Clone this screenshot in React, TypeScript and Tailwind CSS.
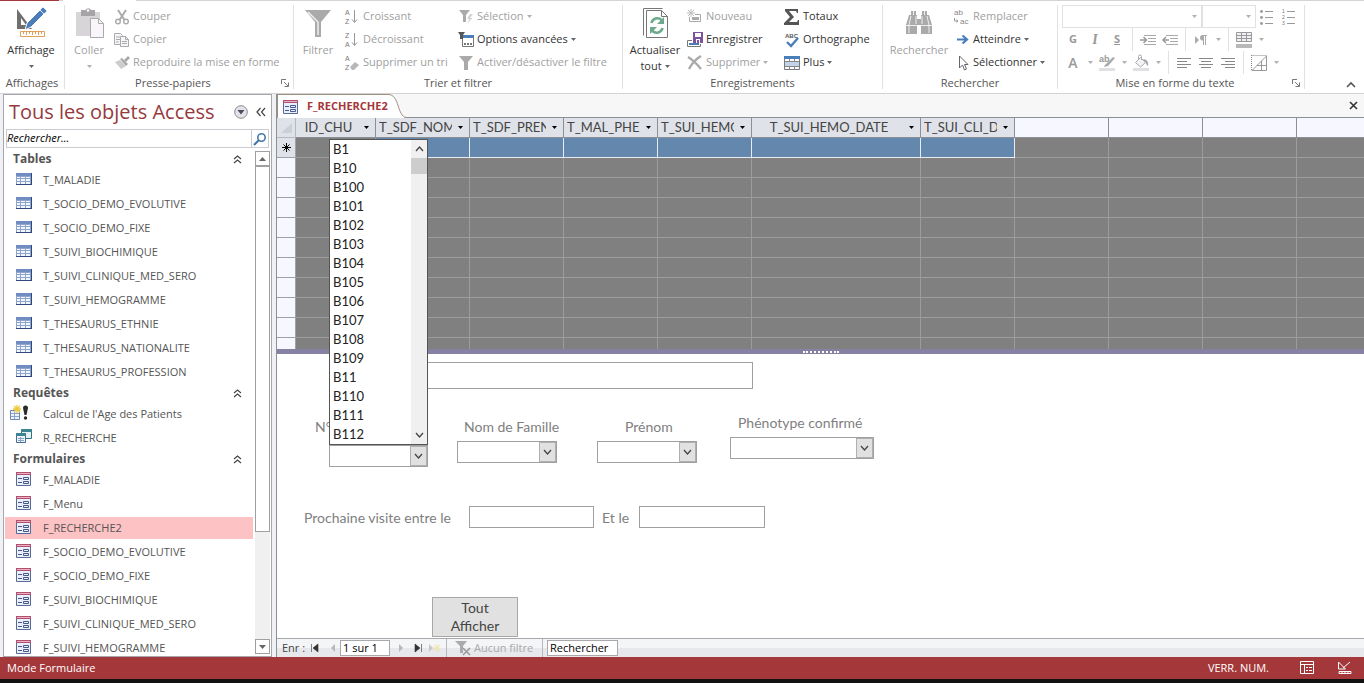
import React, { ReactNode } from 'react';
import clsx from 'clsx';

const tables = [
    'T_MALADIE',
    'T_SOCIO_DEMO_EVOLUTIVE',
    'T_SOCIO_DEMO_FIXE',
    'T_SUIVI_BIOCHIMIQUE',
    'T_SUIVI_CLINIQUE_MED_SERO',
    'T_SUIVI_HEMOGRAMME',
    'T_THESAURUS_ETHNIE',
    'T_THESAURUS_NATIONALITE',
    'T_THESAURUS_PROFESSION',
];

const formulaires = [
    'F_MALADIE',
    'F_Menu',
    'F_RECHERCHE2',
    'F_SOCIO_DEMO_EVOLUTIVE',
    'F_SOCIO_DEMO_FIXE',
    'F_SUIVI_BIOCHIMIQUE',
    'F_SUIVI_CLINIQUE_MED_SERO',
    'F_SUIVI_HEMOGRAMME',
];

const columns = [
    { name: 'ID_CHU', width: 'w-[80px]', center: true },
    { name: 'T_SDF_NOM', width: 'w-[94px]' },
    { name: 'T_SDF_PREN', width: 'w-[94px]' },
    { name: 'T_MAL_PHE', width: 'w-[94px]' },
    { name: 'T_SUI_HEMO', width: 'w-[94px]' },
    { name: 'T_SUI_HEMO_DATE', width: 'w-[169px]', center: true },
    { name: 'T_SUI_CLI_D', width: 'w-[94px]' },
];

const numeros = [
    'B1', 'B10', 'B100', 'B101', 'B102', 'B103', 'B104', 'B105',
    'B106', 'B107', 'B108', 'B109', 'B11', 'B110', 'B111', 'B112',
];

interface IconProps {
    children: ReactNode;
    w?: number;
    h?: number;
    className?: string;
}

const Icon = ({ children, w = 16, h = 16, className }: IconProps) => (
    <svg width={w} height={h} viewBox={`0 0 ${w} ${h}`} fill="none" aria-hidden="true" className={clsx('shrink-0 overflow-visible', className)}>
        {children}
    </svg>
);

const Caret = ({ className = 'text-[#666]' }: { className?: string }) => (
    <Icon w={5} h={3} className={className}><path d="M0 0h5L2.5 3z" fill="currentColor" /></Icon>
);

/* ---------- ribbon icons ---------- */

const ViewIcon = () => (
    <Icon w={32} h={32}>
        <path d="M2 2v20h15zM6 11l5 7H6z" fill="#6f6f6f" fillRule="evenodd" />
        <path d="M12 16 25 3l4 4-13 13-6 3z" fill="#4a7ebb" stroke="#fff" strokeWidth="1" />
        <path d="m25 3 3-3 4 4-3 3z" fill="#4a7ebb" stroke="#fff" strokeWidth=".7" />
        <path d="M5.500 24.500h24v5h-24z" fill="#fff" stroke="#dfa05c" />
        <path d="M8.500 25v2M11.500 25v3M14.500 25v2M17.500 25v3M20.500 25v2M23.500 25v3M26.500 25v2" stroke="#dfa05c" />
    </Icon>
);

const PasteIcon = () => (
    <Icon w={32} h={32}>
        <path d="M3 5h24v24H3z" fill="#d8d5d8" />
        <path d="M8 3h4.500a3 3 0 0 1 5.500 0h4v6H8z" fill="#a7a4a7" />
        <circle cx="15" cy="3.500" r="1.200" fill="#fff" />
        <path d="M17.500 11.500h8l5 5v14h-13z" fill="#f8f6fa" stroke="#aaa" />
        <path d="M25.500 11.500v5h5" stroke="#aaa" />
    </Icon>
);

const CutIcon = () => (
    <Icon>
        <path d="m4 1 6.500 10M12 1 5.500 11" stroke="#aaa" strokeWidth="2" />
        <circle cx="4" cy="12.500" r="2.300" stroke="#aaa" strokeWidth="1.400" />
        <circle cx="12" cy="12.500" r="2.300" stroke="#aaa" strokeWidth="1.400" />
    </Icon>
);

const CopyIcon = () => (
    <Icon>
        <path d="M.5 1.500h6l2 2v9h-8z" fill="#f7f5f9" stroke="#aaa" />
        <path d="M2 5h4M2 7.500h4M2 10h3" stroke="#aaa" />
        <path d="M6.500 4.500h5l3 3v7h-8z" fill="#f7f5f9" stroke="#aaa" />
        <path d="M11.500 4.500v3h3M8 9.500h5M8 11.500h5" stroke="#aaa" />
    </Icon>
);

const BrushIcon = () => (
    <Icon>
        <path d="m1 7 5-2 6 6-5 3z" fill="#ccc" />
        <path d="m6 4 2-1 6 6-2 2z" fill="#aaa" />
        <path d="m10 5 4-4 2 2-4 4z" fill="#aaa" />
    </Icon>
);

const BigFunnel = () => (
    <Icon w={32} h={32}>
        <path d="M3 3h26L19 15v15h-6V15z" fill="#aaa" />
        <path d="m6 5 10 10v13" stroke="#eee" strokeWidth="1.500" />
    </Icon>
);

const Funnel = () => (
    <Icon><path d="M1 1h14l-5 6v8H6V7z" fill="#aaa" /></Icon>
);

const SelectionIcon = () => (
    <Icon>
        <path d="M1 1h11L8 6v7H5V6z" fill="#aaa" />
        <path d="m12 5-3 5h2.500L9 15l5.500-6H12l3-4z" fill="#d2d2d2" />
    </Icon>
);

const AdvancedIcon = () => (
    <Icon>
        <path d="M4.500 4.500h11v10h-11z" fill="#fff" stroke="#777" />
        <path d="M5 3h11v3H5z" fill="#4a7ebb" />
        <path d="M6 11h2v2H6zM9 11h2v2H9zM12 11h2v2h-2z" fill="#777" />
        <path d="M0 0h7L5 3v4H2V3z" fill="#555" />
    </Icon>
);

// Two stacked letters with an arrow or an eraser next to them
const SortIcon = ({ top, bottom, eraser }: { top: string; bottom: string; eraser?: boolean }) => (
    <Icon>
        <text x="1" y="6" fontSize="7" fontFamily="Liberation Sans" fill="#777">{top}</text>
        <text x="1" y="15" fontSize="7" fontFamily="Liberation Sans" fill="#777">{bottom}</text>
        {eraser
            ? <path d="m6 12 5-5 4 3-5 5H8z" fill="#b8b8b8" />
            : <path d="M10.500 1v12M8 10.500l2.500 3 2.500-3" stroke="#999" />}
    </Icon>
);

const RefreshIcon = () => (
    <Icon w={32} h={32}>
        <path d="M23.500 1.500h-19v27" stroke="#777" />
        <path d="M7.500 3.500h15l6 6v21h-21z" fill="#fff" stroke="#777" />
        <path d="M22.500 3.500v6h6" stroke="#777" />
        <path d="M12.500 16a6 6 0 0 1 10-3M23.500 21a6 6 0 0 1-10 3" stroke="#6caa8b" strokeWidth="2.600" />
        <path d="M25 10v7h-7zM11 27v-7h7z" fill="#6caa8b" />
    </Icon>
);

const NewIcon = () => (
    <Icon>
        <path d="M4 0v8M0 4h8M1 1l6 6M7 1 1 7" stroke="#bbb" />
        <path d="M8 5.500h5.500v7H2.500V8" stroke="#aaa" />
        <path d="M5 8h7v3H5z" fill="#aaa" />
    </Icon>
);

const SaveIcon = () => (
    <Icon>
        <path d="M6 0h10v11H6z" fill="#7c529c" />
        <path d="M8 1h6v4H8zM9 7h4v4H9z" fill="#fff" />
        <path d="M10 8h2v3h-2z" fill="#7c529c" />
        <path d="M5 8.500H.5v6h13V12" stroke="#777" />
        <path d="M2 11h10v2H2z" fill="#4a7ebb" />
    </Icon>
);

const DeleteIcon = () => (
    <Icon><path d="M1 2c5 3 9 7 13 12M14 1C9 4 5 8 2 14" stroke="#aaa" strokeWidth="2.400" /></Icon>
);

const SumIcon = () => (
    <Icon><path d="M1 0h13v4h-1l-1-2H5l5 6-5 5h8l1-2h1v5H0v-2l6-6-5-6z" fill="#555" /></Icon>
);

const SpellIcon = () => (
    <Icon>
        <text x="1" y="6" fontSize="6" fontWeight="700" fontFamily="Liberation Sans" fill="#555">ABC</text>
        <path d="m3 10 4 4 7-8" stroke="#4a7ebb" strokeWidth="2.400" />
    </Icon>
);

const MoreIcon = () => (
    <Icon>
        <path d="M.5 2.500h15v12H.5z" fill="#fff" stroke="#777" />
        <path d="M0 1h16v3H0z" fill="#4a7ebb" />
        <path d="M1 7h14v4H1z" fill="#c3d4ea" />
        <path d="M.5 6.500h15M.5 11.500h15M5.500 4v3M10.500 4v3M5.500 11v3M10.500 11v3" stroke="#888" />
    </Icon>
);

const Binoculars = () => (
    <Icon w={32} h={32}>
        <path d="M8 4h5v4h1v4h4V8h1V4h5v4h2l3 10v9H18v-9h-4v9H3v-9L6 8h2z" fill="#aaa" />
        <path d="M10.500 4v4M21.500 4v4M8 9 6 18v8M24 9l2 9v8M13 9v8M19 9v8M3 18.500h11M18 18.500h11" stroke="#fff" strokeWidth=".8" />
    </Icon>
);

const ReplaceIcon = () => (
    <Icon>
        <text x="0" y="6" fontSize="8" fontFamily="Liberation Sans" fill="#888">ab</text>
        <text x="6" y="15" fontSize="8" fontFamily="Liberation Sans" fill="#888">ac</text>
        <path d="M.5 9v3H4M2.500 10.500 4 12l-1.500 1.500" stroke="#999" />
    </Icon>
);

const GotoIcon = () => (
    <Icon><path d="M3 7.500h10M8.500 3.500l4.500 4-4.500 4" stroke="#4a7ebb" strokeWidth="2.200" /></Icon>
);

const PointerIcon = () => (
    <Icon><path d="M5.500 1v12l3-3 2 5 2-1-2-4.500h3.500z" fill="#fff" stroke="#666" /></Icon>
);

const BulletsIcon = ({ numbered }: { numbered?: boolean }) => (
    <Icon>
        {[2, 8, 14].map((y, i) => numbered
            ? <text key={y} x="1" y={y + 2} fontSize="5" fontFamily="Liberation Sans" fill="#777">{i + 1}</text>
            : <circle key={y} cx="2.500" cy={y + 0.5} r="1.400" fill="#999" />)}
        <path d="M6 2.500h8M6 8.500h8M6 14.500h8" stroke="#999" />
    </Icon>
);

const IndentIcon = ({ left }: { left?: boolean }) => (
    <Icon>
        <path d="M4 3.500h12M8 6.500h8M8 9.500h8M4 12.500h12" stroke="#aaa" />
        <path d={left ? 'M7 8H1M4 5 1 8l3 3' : 'M0 8h6M3.500 5l3 3-3 3'} stroke="#999" strokeWidth="1.500" />
    </Icon>
);

const PilcrowIcon = () => (
    <Icon>
        <path d="m2 4 4 4-4 4z" fill="#aaa" />
        <path d="M7 6a2.500 2.500 0 0 1 2.500-3H14v1h-1v9h-1V4h-1v9h-1V8.500A2.500 2.500 0 0 1 7 6z" fill="#aaa" />
    </Icon>
);

const GridlinesIcon = () => (
    <Icon>
        <path d="M.5.500h15v9H.5z" fill="#f0eef4" stroke="#999" />
        <path d="M0 3.500h16M0 6.500h16M5.500 0v10M10.500 0v10" stroke="#999" />
        <path d="M0 12h16v4H0z" fill="#b8b8b8" />
    </Icon>
);

const HighlightIcon = () => (
    <Icon>
        <text x="0" y="7" fontSize="9" fontWeight="700" fontFamily="Liberation Sans" fill="#999">ab</text>
        <path d="m6 10 8-8 2 1-7 8-4 1z" fill="#aaa" />
        <path d="M0 13h16v3H0z" fill="#e2dfe4" />
    </Icon>
);

const BucketIcon = () => (
    <Icon>
        <path d="m2.500 7.500 5-5 5 5-5 4.500z" fill="#f4f2f7" stroke="#aaa" />
        <path d="M5.500 5V1.500a1.500 1.500 0 0 1 3 0V5" stroke="#aaa" />
        <path d="M10 4c4 0 6 3 5 7-2-1-2-4-3-4z" fill="#aaa" />
        <path d="M0 13h16v3H0z" fill="#e2dfe4" />
    </Icon>
);

const AlignIcon = ({ d }: { d: string }) => (
    <Icon><path d={d} stroke="#888" /></Icon>
);

const AltRowIcon = () => (
    <Icon>
        <path d="M.5.500h15M.5 0v16" stroke="#888" strokeDasharray="1 1" />
        <path d="M15.500 1v14.500H1zM6 10.500h9M10.500 6v9" stroke="#999" />
    </Icon>
);

const Launcher = () => (
    <Icon w={8} h={8}><path d="M.5 5V.5H5M3 3l4 4M7.500 3.500v4h-4" stroke="#777" /></Icon>
);

/* ---------- object icons ---------- */

const TableIcon = () => (
    <Icon>
        <path d="M0 2h16v12H0z" fill="#2f4a78" />
        <path d="M0 2h15v3H0z" fill="#6f8dc0" />
        <path d="M0 5h15v8H0z" fill="#8ea4cc" />
        <path d="M1 6h3v1H1zM5 6h4v1H5zM10 6h4v1h-4zM1 8h3v2H1zM5 8h4v2H5zM10 8h4v2h-4zM1 11h3v2H1zM5 11h4v2H5zM10 11h4v2h-4z" fill="#f2f6ff" />
    </Icon>
);

const FormIcon = () => (
    <Icon>
        <path d="M.5 1.500h14v13H.5z" fill="#eaf0fb" stroke="#5a6a94" />
        <path d="M0 1h15v3H0z" fill="#b3506f" />
        <path d="M1 2h13v1H1z" fill="#e6b2c0" />
        <path d="M2 7.500h4M2 11.500h4M7.500 6.500h5v2h-5zM7.500 10.500h5v2h-5z" stroke="#47598c" />
    </Icon>
);

const ActionQueryIcon = () => (
    <Icon w={20}>
        <path d="M.5 5.500h9v9h-9z" fill="#edf2fb" stroke="#6b86b8" />
        <path d="M1 8.500h8M1 11.500h8M4.500 6v8" stroke="#8ea4cc" />
        <path d="M7 0v8M3 4h8M4 1l6 6M10 1 4 7" stroke="#f0c93a" strokeWidth="1.300" />
        <path d="M13 3a2.500 2.500 0 0 1 5 0l-1.500 7h-2z" fill="#2b2b2b" />
        <circle cx="15.500" cy="13" r="1.700" fill="#2b2b2b" />
    </Icon>
);

const QueryIcon = () => (
    <Icon>
        <path d="M5.500.500h10v9h-10z" fill="#e5f1f3" stroke="#2f7280" />
        <path d="M5 0h11v3H5z" fill="#3d8493" />
        <path d="M.5 4.500h9v9h-9z" fill="#eef3fb" stroke="#456a96" />
        <path d="M0 4h10v3H0z" fill="#3d8493" />
        <path d="M2 9.500h6M2 11.500h6M4.500 8v5" stroke="#8aa3c4" />
    </Icon>
);

/* ---------- ribbon ---------- */

interface CommandProps {
    icon: ReactNode;
    label: string;
    caret?: boolean;
    off?: boolean;
}

const Command = ({ icon, label, caret, off }: CommandProps) => (
    <button type="button" disabled={off} className={clsx('flex h-[23px] items-center gap-[3px] whitespace-nowrap', off ? 'text-[#a0a0a0]' : 'text-[#333]')}>
        {icon}
        <span>{label}</span>
        {caret && <Caret className={off ? 'text-[#b0b0b0]' : 'text-[#666]'} />}
    </button>
);

interface BigCommandProps extends CommandProps {
    second?: string;
}

const BigCommand = ({ icon, label, second, caret, off }: BigCommandProps) => (
    <button type="button" disabled={off} className={clsx('flex w-14 flex-col items-center whitespace-nowrap pt-[2px]', off ? 'text-[#a0a0a0]' : 'text-[#333]')}>
        {icon}
        <span className="mt-[3px] leading-4">{label}</span>
        <span className="flex h-4 items-center gap-[3px] leading-4">
            {second}
            {caret && <Caret className={off ? 'text-[#b0b0b0]' : 'text-[#666]'} />}
        </span>
    </button>
);

interface GroupProps {
    title: string;
    width: string;
    launcher?: boolean;
    children: ReactNode;
}

const Group = ({ title, width, launcher, children }: GroupProps) => (
    <section className={clsx('my-1 flex shrink-0 flex-col border-r border-[#e1e1e1]', width)}>
        <div className="flex min-h-0 flex-1">{children}</div>
        <div className="flex h-3 items-center text-[#555]">
            <h2 className="flex-1 text-center leading-3 whitespace-nowrap">{title}</h2>
            {launcher && <button type="button" aria-label={`Options ${title}`} className="w-3"><Launcher /></button>}
        </div>
    </section>
);

const Tool = ({ label, children }: { label: string; children: ReactNode }) => (
    <button type="button" disabled aria-label={label} className="flex h-[23px] w-[22px] items-center justify-center text-[#999]">
        {children}
    </button>
);

const ToolCaret = () => <span className="flex w-3 items-center justify-center"><Caret className="text-[#b0b0b0]" /></span>;
const ToolSep = () => <span className="mx-1 h-[23px] w-px bg-[#e1e1e1]" />;

const FontSelect = ({ label, width }: { label: string; width: string }) => (
    <div className={clsx('flex h-[23px] items-center border border-[#e1e1e1]', width)}>
        <select aria-label={label} disabled className="h-full min-w-0 flex-1 appearance-none bg-white" />
        <Caret className="mr-1 text-[#b0b0b0]" />
    </div>
);

const Ribbon = () => (
    <header className="shrink-0 bg-white">
        <div className="flex h-px bg-[#d4d4d4]">
            <span className="w-[59px] bg-[#a4373a]" />
            <span className="ml-1 w-[73px] bg-white" />
        </div>
        <div className="flex h-[93px] border-b border-[#d4d4d4]">
            <Group title="Affichages" width="w-[65px]">
                <div className="pl-[3px]"><BigCommand icon={<ViewIcon />} label="Affichage" caret /></div>
            </Group>
            <Group title="Presse-papiers" width="w-[229px]" launcher>
                <div className="w-[49px] -ml-1"><BigCommand icon={<PasteIcon />} label="Coller" caret off /></div>
                <div className="ml-1">
                    <Command icon={<CutIcon />} label="Couper" off />
                    <Command icon={<CopyIcon />} label="Copier" off />
                    <Command icon={<BrushIcon />} label="Reproduire la mise en forme" off />
                </div>
            </Group>
            <Group title="Trier et filtrer" width="w-[329px]">
                <div className="w-[50px] -ml-1"><BigCommand icon={<BigFunnel />} label="Filtrer" off /></div>
                <div className="ml-1 w-[114px]">
                    <Command icon={<SortIcon top="A" bottom="Z" />} label="Croissant" off />
                    <Command icon={<SortIcon top="Z" bottom="A" />} label="Décroissant" off />
                    <Command icon={<SortIcon top="A" bottom="Z" eraser />} label="Supprimer un tri" off />
                </div>
                <div>
                    <Command icon={<SelectionIcon />} label="Sélection" caret off />
                    <Command icon={<AdvancedIcon />} label="Options avancées" caret />
                    <Command icon={<Funnel />} label="Activer/désactiver le filtre" off />
                </div>
            </Group>
            <Group title="Enregistrements" width="w-[260px]">
                <div className="w-16 pl-1"><BigCommand icon={<RefreshIcon />} label="Actualiser" second="tout" caret /></div>
                <div className="w-[97px]">
                    <Command icon={<NewIcon />} label="Nouveau" off />
                    <Command icon={<SaveIcon />} label="Enregistrer" />
                    <Command icon={<DeleteIcon />} label="Supprimer" off caret />
                </div>
                <div>
                    <Command icon={<SumIcon />} label="Totaux" />
                    <Command icon={<SpellIcon />} label="Orthographe" />
                    <Command icon={<MoreIcon />} label="Plus" caret />
                </div>
            </Group>
            <Group title="Rechercher" width="w-[175px]">
                <div className="w-[71px] pl-2"><BigCommand icon={<Binoculars />} label="Rechercher" off /></div>
                <div>
                    <Command icon={<ReplaceIcon />} label="Remplacer" off />
                    <Command icon={<GotoIcon />} label="Atteindre" caret />
                    <Command icon={<PointerIcon />} label="Sélectionner" caret />
                </div>
            </Group>
            <Group title="Mise en forme du texte" width="w-[247px]" launcher>
                <div className="flex flex-col pl-1">
                    <div className="flex">
                        <FontSelect label="Police" width="w-[140px]" />
                        <FontSelect label="Taille" width="w-[54px]" />
                        <Tool label="Puces"><BulletsIcon /></Tool>
                        <Tool label="Numérotation"><BulletsIcon numbered /></Tool>
                    </div>
                    <div className="flex">
                        <Tool label="Gras"><b>G</b></Tool>
                        <Tool label="Italique"><i className="font-serif text-sm font-bold">I</i></Tool>
                        <Tool label="Souligné"><b className="underline">S</b></Tool>
                        <ToolSep />
                        <Tool label="Augmenter le retrait"><IndentIcon /></Tool>
                        <Tool label="Diminuer le retrait"><IndentIcon left /></Tool>
                        <ToolSep />
                        <Tool label="Sens du texte"><PilcrowIcon /></Tool>
                        <ToolCaret />
                        <ToolSep />
                        <Tool label="Quadrillage"><GridlinesIcon /></Tool>
                        <ToolCaret />
                    </div>
                    <div className="flex">
                        <Tool label="Couleur de police"><span className="text-sm font-semibold">A</span></Tool>
                        <ToolCaret />
                        <Tool label="Surlignage"><HighlightIcon /></Tool>
                        <ToolCaret />
                        <Tool label="Remplissage"><BucketIcon /></Tool>
                        <ToolCaret />
                        <ToolSep />
                        <Tool label="Aligner à gauche"><AlignIcon d="M1 3.500h14M1 6.500h10M1 9.500h14M1 12.500h10" /></Tool>
                        <Tool label="Centrer"><AlignIcon d="M1 3.500h14M3 6.500h10M1 9.500h14M3 12.500h10" /></Tool>
                        <Tool label="Aligner à droite"><AlignIcon d="M1 3.500h14M5 6.500h10M1 9.500h14M5 12.500h10" /></Tool>
                        <ToolSep />
                        <Tool label="Couleur des lignes"><AltRowIcon /></Tool>
                        <ToolCaret />
                    </div>
                </div>
            </Group>
            <button type="button" aria-label="Réduire le ruban" className="mr-2 mb-1 ml-auto self-end">
                <Icon w={10} h={8}><path d="m1 6 4-4 4 4" stroke="#555" strokeWidth="1.600" /></Icon>
            </button>
        </div>
    </header>
);

/* ---------- navigation pane ---------- */

const PaneGroup = ({ title, children }: { title: string; children: ReactNode }) => (
    <section>
        <h3 className="flex h-[18px] items-center justify-between pr-[11px] pl-2 text-xs font-bold text-[#555]">
            {title}
            <Icon w={9} h={9}><path d="m1 4 3.500-3L8 4M1 8l3.500-3L8 8" stroke="#444" strokeWidth="1.200" /></Icon>
        </h3>
        <ul>{children}</ul>
    </section>
);

interface PaneItemProps {
    icon: ReactNode;
    name: string;
    active?: boolean;
}

const PaneItem = ({ icon, name, active }: PaneItemProps) => (
    <li className="py-px">
        <button type="button" className={clsx('flex h-[22px] w-full items-center text-left text-[#555]', active && 'bg-[#fcc2c4]')}>
            <span className="mb-[2px] flex w-[38px] justify-center">{icon}</span>
            {name}
        </button>
    </li>
);

const NavigationPane = () => (
    <aside className="ml-[3px] flex w-[269px] shrink-0 flex-col border border-[#a5a8ad] bg-white">
        <div className="flex h-[34px] shrink-0 items-center px-[5px]">
            <h1 className="flex-1 text-[20px] whitespace-nowrap text-[#953a3d]">Tous les objets Access</h1>
            <button type="button" aria-label="Menu des objets" className="mr-2">
                <Icon w={14} h={14}>
                    <circle cx="7" cy="7" r="6.300" fill="#e3e3ea" stroke="#8a8a8f" />
                    <path d="M3.500 5h7L7 9.500z" fill="#4a4d5c" />
                </Icon>
            </button>
            <button type="button" aria-label="Réduire le volet">
                <Icon w={10} h={10}><path d="M4.500 1 1 5l3.500 4M9 1 5.500 5 9 9" stroke="#444" strokeWidth="1.200" /></Icon>
            </button>
        </div>
        <div className="mx-[2px] flex h-[19px] shrink-0 border border-[#c9cbd0]">
            <input type="text" aria-label="Rechercher un objet" placeholder="Rechercher..." className="min-w-0 flex-1 text-[11px] italic outline-none placeholder:text-black" />
            <button type="button" aria-label="Lancer la recherche" className="flex w-[17px] items-center justify-center border-l border-[#c9cbd0]">
                <Icon w={14} h={14}>
                    <circle cx="8.500" cy="5.500" r="3.700" stroke="#4477aa" strokeWidth="1.600" />
                    <path d="m6 8-5 5" stroke="#4477aa" strokeWidth="2.200" />
                </Icon>
            </button>
        </div>
        <div className="mt-[2px] flex min-h-0 flex-1">
            <div className="ml-px flex-1 overflow-hidden">
                <PaneGroup title="Tables">
                    {tables.map((name) => <PaneItem key={name} icon={<TableIcon />} name={name} />)}
                </PaneGroup>
                <PaneGroup title="Requêtes">
                    <PaneItem icon={<span className="mr-2"><ActionQueryIcon /></span>} name="Calcul de l'Age des Patients" />
                    <PaneItem icon={<QueryIcon />} name="R_RECHERCHE" />
                </PaneGroup>
                <PaneGroup title="Formulaires">
                    {formulaires.map((name) => (
                        <PaneItem key={name} icon={<FormIcon />} name={name} active={name === 'F_RECHERCHE2'} />
                    ))}
                </PaneGroup>
            </div>
            <div className="mt-px mr-px mb-[2px] ml-[2px] flex w-[15px] flex-col bg-[#f0f0f0]">
                <button type="button" aria-label="Défiler vers le haut" className="flex h-[15px] items-center justify-center border border-[#a0a0a0] bg-white">
                    <Icon w={7} h={4}><path d="M0 4h7L3.500 0z" fill="#666" /></Icon>
                </button>
                <div className="h-[366px] border border-[#a0a0a0] bg-white" />
                <button type="button" aria-label="Défiler vers le bas" className="mt-auto flex h-[15px] items-center justify-center border border-[#a0a0a0] bg-white">
                    <Icon w={7} h={4}><path d="M0 0h7L3.500 4z" fill="#666" /></Icon>
                </button>
            </div>
        </div>
    </aside>
);

/* ---------- datasheet ---------- */

const TabBar = () => (
    <div className="flex h-6 shrink-0 items-stretch border-b border-[#8d8f96] bg-[#f7f7f7]">
        <div className="-mb-px flex items-center border-t border-l border-[#9c8f80] bg-white pl-[5px] text-[11px] font-bold text-[#a4373a]">
            <FormIcon />
            <span className="ml-2">F_RECHERCHE2</span>
        </div>
        <Icon w={18} h={24}>
            <path d="M0 .5c6 0 8 5 10 11s4 12 8 12.500H0z" fill="#fff" />
            <path d="M0 .5c6 0 8 5 10 11s4 11.500 8 12" stroke="#9c8f80" />
        </Icon>
        <button type="button" aria-label="Fermer" className="mr-[6px] ml-auto">
            <Icon w={9} h={9}><path d="m1 1 7 7M8 1 1 8" stroke="#333" strokeWidth="1.600" /></Icon>
        </button>
    </div>
);

const Datasheet = () => (
    <div className="h-[231px] shrink-0 overflow-hidden">
        <table className="w-full table-fixed border-separate border-spacing-0">
            <thead>
                <tr className="h-5 bg-[#dfe2e8] text-left text-[#444]">
                    <th aria-label="Sélecteur" className="w-[19px] border-r border-b border-[#b5b8bf] p-0">
                        <Icon className="mx-auto"><path d="M14 3v10H3z" fill="#c9d0da" /></Icon>
                    </th>
                    {columns.map(({ name, width, center }) => (
                        <th key={name} className={clsx('border-r border-b border-[#8d8f96] p-0 font-normal', width)}>
                            <div className="flex items-center pr-[6px] pl-[3px]">
                                <span className={clsx('flex-1 overflow-hidden font-[Lato,sans-serif] text-[13px] leading-[19px] whitespace-nowrap', center && 'text-center')}>{name}</span>
                                <Caret className="ml-[6px] text-black" />
                            </div>
                        </th>
                    ))}
                    {[1, 2, 3].map((n) => <td key={n} className="w-[94px] border-r border-b border-[#8d8f96] bg-[#f7f8ff]" />)}
                    <td className="border-b border-[#8d8f96] bg-[#f7f8ff]" />
                </tr>
            </thead>
            <tbody>
                {Array.from({ length: 11 }, (_, row) => (
                    <tr key={row} className="h-5 bg-[#808080]">
                        <td className={clsx('border-r border-b border-[#a0a0a8] p-0 text-center', row ? 'bg-[#f7f8ff]' : 'bg-[#dfe2e8]')}>
                            {row === 0 && (
                                <Icon w={9} h={9} className="mx-auto"><path d="M4.500 0v9M0 4.500h9M1.500 1.500l6 6M7.500 1.500l-6 6" stroke="#000" /></Icon>
                            )}
                        </td>
                        {Array.from({ length: 11 }, (_, col) => (
                            <td
                                key={col}
                                className={clsx(
                                    'border-b p-0',
                                    col < 10 && 'border-r',
                                    row === 0 && col > 0 && col < 7 ? 'border-[#e8ecf2] bg-[#6387ad]' : 'border-[#9c9c9c]',
                                )}
                            />
                        ))}
                    </tr>
                ))}
            </tbody>
        </table>
    </div>
);

/* ---------- form ---------- */

const Chevron = ({ up }: { up?: boolean }) => (
    <Icon w={9} h={6}><path d={up ? 'm1 5 3.500-4L8 5' : 'm1 1 3.500 4L8 1'} stroke="#444" strokeWidth="1.300" /></Icon>
);

const Combo = ({ id, width }: { id: string; width: string }) => (
    <div className={clsx('flex h-[22px] border border-[#a0a0a0] bg-white', width)}>
        <select id={id} className="min-w-0 flex-1 appearance-none outline-none" />
        <span className="flex w-[17px] items-center justify-center border border-[#b0b0b0] bg-[#e1e1e1]"><Chevron /></span>
    </div>
);

const NumeroList = () => (
    <div className="absolute bottom-full left-0 z-10 flex w-full border border-[#555] bg-white text-[#222]">
        <ul role="listbox" aria-label="Numéros" className="flex-1 pl-[3px] text-[13px]">
            {numeros.map((n) => <li key={n} role="option" aria-selected={false} className="h-[19px] leading-[19px]">{n}</li>)}
        </ul>
        <div className="flex w-4 flex-col items-center bg-[#f0f0f0]">
            <span className="flex h-[18px] items-center"><Chevron up /></span>
            <span className="h-4 w-full bg-[#cdcdcd]" />
            <span className="mt-auto flex h-[18px] items-center"><Chevron /></span>
        </div>
    </div>
);

const SearchForm = () => (
    <form className="flex min-h-0 flex-1 flex-col items-start bg-white pt-2 pl-[27px] font-[Lato,sans-serif] text-[14px] text-[#808080]">
        <input type="text" aria-label="Titre" className="ml-[25px] h-[27px] w-[424px] border border-[#a0a0a0] outline-none" />

        <div className="mt-6 flex items-start">
            <div className="mt-1 w-[153px] pl-[11px]">
                <label htmlFor="numero" className="block h-6 leading-5">N°</label>
                <div className="relative mt-1 ml-[14px] w-[99px]">
                    <NumeroList />
                    <Combo id="numero" width="w-[99px]" />
                </div>
            </div>
            <div className="mt-1 w-[140px]">
                <label htmlFor="nom" className="block h-6 pl-[7px] leading-5">Nom de Famille</label>
                <Combo id="nom" width="w-[100px]" />
            </div>
            <div className="mt-1 w-[133px]">
                <label htmlFor="prenom" className="block h-6 pl-7 leading-5">Prénom</label>
                <Combo id="prenom" width="w-[100px]" />
            </div>
            <div>
                <label htmlFor="phenotype" className="block h-6 pl-2 leading-5">Phénotype confirmé</label>
                <Combo id="phenotype" width="w-[144px]" />
            </div>
        </div>

        <div className="mt-[39px] flex items-center">
            <label htmlFor="debut" className="w-[165px]">Prochaine visite entre le</label>
            <input id="debut" type="text" className="h-[22px] w-[125px] border border-[#a0a0a0] outline-none" />
            <label htmlFor="fin" className="w-[45px] pl-2">Et le</label>
            <input id="fin" type="text" className="h-[22px] w-[126px] border border-[#a0a0a0] outline-none" />
        </div>

        <button type="button" className="mt-auto mb-px ml-32 h-10 w-[86px] border border-[#a8a8a8] bg-[#e1e1e1] px-4 leading-[18px] text-[#444]">
            Tout Afficher
        </button>
    </form>
);

const RecordBar = () => (
    <footer className="flex h-[19px] shrink-0 items-center border-t border-[#a8a8ad] bg-gradient-to-b from-[#f4f5f7] from-50% to-[#e6e8eb] to-50% pl-[5px] text-[#444]">
        <span className="w-7">Enr :</span>
        <button type="button" aria-label="Premier"><Icon w={10} h={8}><path d="M1.500 0v8M8 0v8L3 4z" fill="#333" stroke="#333" strokeWidth=".6" /></Icon></button>
        <button type="button" aria-label="Précédent" className="ml-2"><Icon w={10} h={8}><path d="M7 0v8L3 4z" fill="#b8b8b8" /></Icon></button>
        <input type="text" aria-label="Enregistrement courant" defaultValue="1 sur 1" className="ml-[2px] h-4 w-[50px] border border-[#a8a8ad] bg-white pl-[2px] text-[11px] text-black" />
        <button type="button" aria-label="Suivant" className="ml-[6px]"><Icon w={10} h={8}><path d="M3 0v8l4-4z" fill="#b8b8b8" /></Icon></button>
        <button type="button" aria-label="Dernier" className="ml-2"><Icon w={10} h={8}><path d="M1 0v8l5-4zM7.500 0v8" fill="#333" stroke="#333" strokeWidth=".6" /></Icon></button>
        <button type="button" aria-label="Nouvel enregistrement" className="ml-1">
            <Icon w={14} h={8}><path d="M1 0v8l4-4z" fill="#c8c8c8" /><path d="M9 0v8M5 4h8M6 1l6 6M12 1 6 7" stroke="#f1e3a8" /></Icon>
        </button>
        <button type="button" disabled className="ml-1 flex h-full w-[97px] items-center gap-[3px] border-x border-[#b5b8bf] pl-2 whitespace-nowrap text-[#a8a8a8]">
            <Icon><path d="M0 1h12L8 6v7H5V6z" fill="#aaa" /><path d="m8 8 7 7M15 8l-7 7" stroke="#999" strokeWidth="1.500" /></Icon>
            Aucun filtre
        </button>
        <input type="text" aria-label="Rechercher dans les enregistrements" defaultValue="Rechercher" className="ml-1 h-4 w-[71px] border border-[#a8a8ad] bg-white pl-[2px] text-[11px] text-black" />
    </footer>
);

const StatusBar = () => (
    <div className="shrink-0 border-b-4 border-[#111] bg-[#a4373a]">
        <div className="flex h-[22px] items-center pl-[7px] text-white">
            <span className="flex-1">Mode Formulaire</span>
            <span className="mr-[31px]">VERR. NUM.</span>
            <button type="button" aria-label="Mode Formulaire" className="mr-6">
                <Icon w={14} h={14}><path d="M.5.500h13v12H.5zM.5 3.500h13M4.500 3.500v9M6 6.500h2M9 6.500h3M6 9.500h2M9 9.500h3" stroke="#fff" /></Icon>
            </button>
            <button type="button" aria-label="Mode Création" className="mr-3">
                <Icon w={14} h={14}><path d="M.5 1v7h7zM5 7l7-6M1 10.500h12v2H1zM4 10v2M7 10v2M10 10v2" stroke="#fff" /></Icon>
            </button>
        </div>
    </div>
);

const App: React.FC = () => {
    return (
        <div className="flex h-screen flex-col overflow-hidden bg-white font-['Open_Sans',sans-serif] text-[11px]">
            <Ribbon />
            <div className="flex min-h-0 flex-1 bg-[#f0f1f4]">
                <NavigationPane />
                <main className="ml-1 flex min-w-0 flex-1 flex-col border-l border-[#8d8f96]">
                    <TabBar />
                    <Datasheet />
                    <div className="flex h-[5px] shrink-0 items-center justify-center bg-[#8481a3]">
                        <span className="w-9 border-t-2 border-dotted border-white" />
                    </div>
                    <SearchForm />
                    <RecordBar />
                </main>
            </div>
            <StatusBar />
        </div>
    );
};

export default App;
